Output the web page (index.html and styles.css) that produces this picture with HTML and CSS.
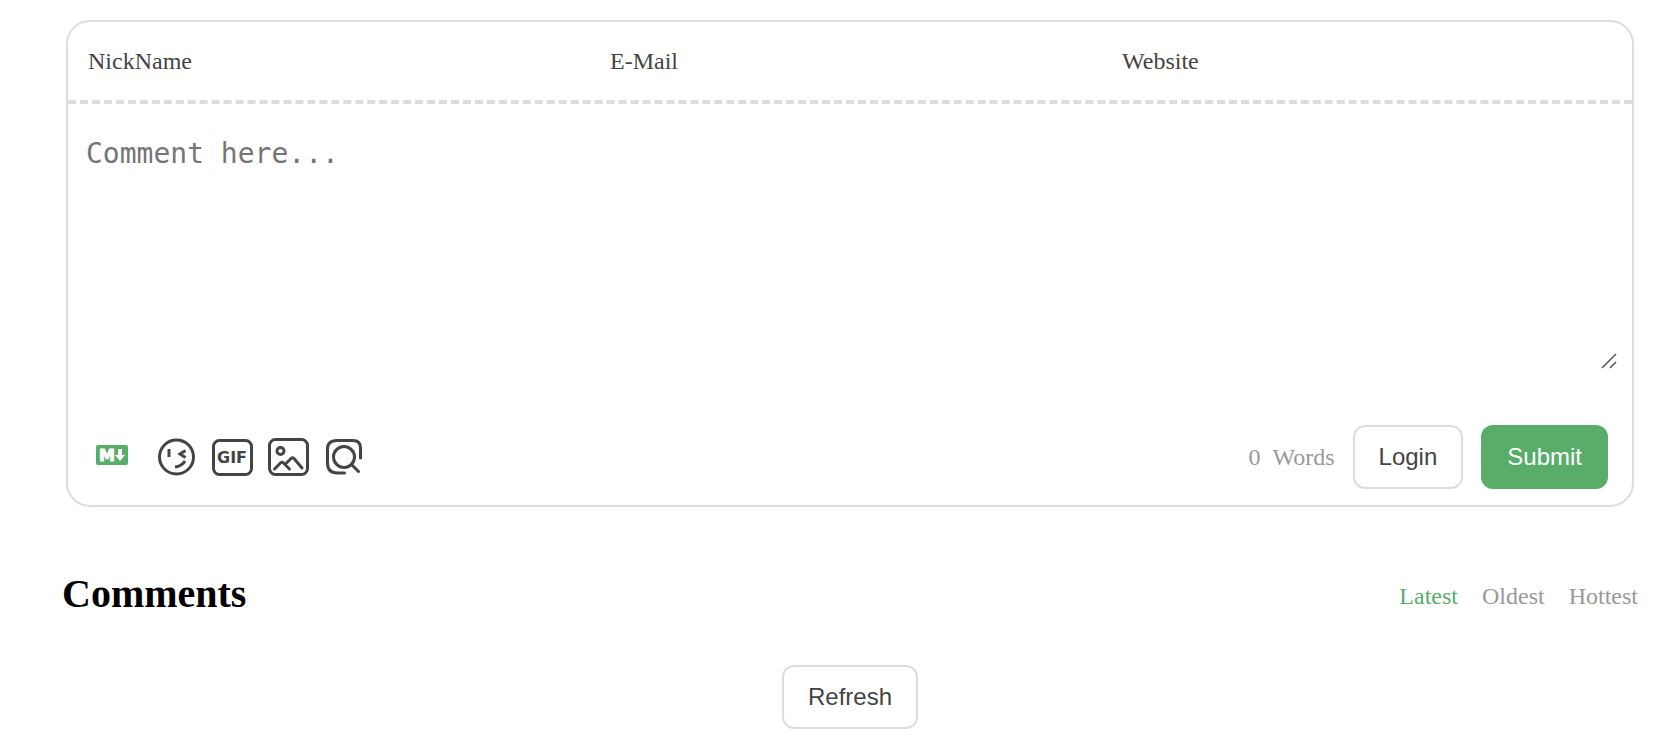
FILE: index.html
```html
<!DOCTYPE html>
<html lang="en">
	<head>
		<meta charset="utf-8">
		<title>Comments</title>
		<link rel="stylesheet" href="styles.css">
	</head>
	<body>
		<div class="comment">
			<form class="panel">
				<div class="header">
					<div class="header-item">
						<label for="nick">NickName</label>
						<input type="text" id="nick" name="nick">
					</div>
					<div class="header-item">
						<label for="mail">E-Mail</label>
						<input type="email" id="mail" name="mail">
					</div>
					<div class="header-item">
						<label for="link">Website</label>
						<input type="text" id="link" name="link">
					</div>
				</div>
				<div class="editor-box">
					<textarea class="editor" aria-label="Comment" placeholder="Comment here..."></textarea>
					<svg class="grip" viewBox="0 0 16 16"><path d="M1 15 15 1M9 15 15 9"/></svg>
				</div>
				<div class="footer">
					<div class="actions">
						<a class="markdown" href="#" aria-label="Markdown guide">
							<svg viewBox="0 0 32 20">
								<rect width="32" height="20" rx="2"/>
								<text x="3" y="16">M</text>
								<path d="M22 4h4v6h3l-5 6-5-6h3z"/>
							</svg>
						</a>
						<!-- emoji -->
						<button type="button" class="action" aria-label="Emoji">
							<svg viewBox="0 0 42 42">
								<circle cx="20.500" cy="21" r="17"/>
								<path class="flat" d="M13 13v8M29.500 14.500l-5.500 3.500 5.500 3.500"/>
								<path class="flat" d="M29 25c-2 3.500-5.500 5.500-10 6"/>
							</svg>
						</button>
						<!-- gif -->
						<button type="button" class="action" aria-label="GIF">
							<svg viewBox="0 0 42 42">
								<rect x="1.500" y="4.500" width="38" height="34" rx="6"/>
								<text x="5" y="27">GIF</text>
							</svg>
						</button>
						<!-- image -->
						<button type="button" class="action" aria-label="Image">
							<svg viewBox="0 0 42 42">
								<rect x="1.500" y="3.500" width="38" height="35" rx="6"/>
								<circle cx="12.500" cy="15" r="3.500"/>
								<path d="M6.500 33l6-6q1.500-1.500 3 0l6 6M17.500 28l5.500-5.500q1.500-1.500 3 0L34 32"/>
							</svg>
						</button>
						<!-- preview -->
						<button type="button" class="action" aria-label="Preview">
							<svg viewBox="0 0 42 42">
								<path d="M36.500 22V12q0-7.500-7.500-7.500H13Q3.500 4.500 3.500 13v14q0 10 10 10h7"/>
								<circle cx="20" cy="21" r="10.500"/>
								<path d="M27.500 28.500l7 7"/>
							</svg>
						</button>
					</div>
					<div class="info">
						<div class="words"><span>0</span><span>Words</span></div>
						<button type="button" class="btn">Login</button>
						<button type="submit" class="btn primary">Submit</button>
					</div>
				</div>
			</form>
			<div class="meta">
				<h3 class="count">Comments</h3>
				<ul class="sort">
					<li><a class="active" href="#">Latest</a></li>
					<li><a href="#">Oldest</a></li>
					<li><a href="#">Hottest</a></li>
				</ul>
			</div>
			<div class="operation">
				<button type="button" class="btn">Refresh</button>
			</div>
		</div>
	</body>
</html>
```
FILE: styles.css
```css
* {
	box-sizing: border-box;
	margin: 0;
	padding: 0;
}
body {
	padding: 20px 30px 12px 62px;
	background: #fff;
	color: #444;
	font-family: "Liberation Serif", "Times New Roman", serif;
	font-size: 24px;
	line-height: 28px;
}
ul {
	list-style: none;
}
a {
	text-decoration: none;
}
.panel {
	margin: 0 4px;
	border: 2px solid #ddd;
	border-radius: 24px;
}

/* visitor fields */
.header {
	display: grid;
	grid-template-columns: 522fr 512fr 510fr;
	padding: 0 10px;
	border-bottom: 4px dashed #ddd;
}
.header-item {
	display: flex;
	align-items: center;
	height: 78px;
}
.header-item label {
	padding: 0 10px;
}
.header-item input {
	flex: 1;
	min-width: 0;
	border: none;
	outline: none;
	background: transparent;
	font-size: 24px;
}

/* editor */
.editor-box {
	position: relative;
	margin: 10px 12px 0;
}
.editor {
	display: block;
	width: 100%;
	height: 258px;
	padding: 24px 6px;
	border: none;
	outline: none;
	resize: none;
	background: transparent;
	font-family: "DejaVu Sans Mono", monospace;
	font-size: 28px;
	line-height: 32px;
}
.editor::placeholder {
	color: #757575;
}
.grip {
	position: absolute;
	right: 3px;
	bottom: 3px;
	width: 16px;
	height: 16px;
	stroke: #555;
	stroke-width: 1.5;
	pointer-events: none;
}

/* toolbar */
.footer {
	display: flex;
	align-items: center;
	justify-content: space-between;
	padding: 53px 24px 16px 28px;
}
.actions {
	display: flex;
	align-items: center;
	gap: 14px;
}
.markdown {
	margin-right: 14px;
	padding-bottom: 4px;
}
.markdown svg {
	display: block;
	width: 32px;
	height: 20px;
	fill: #fff;
}
.markdown rect {
	fill: #58ad69;
}
.markdown text {
	stroke: #fff;
	stroke-width: 1;
	font: bold 16px "DejaVu Sans", sans-serif;
}
.action {
	border: none;
	background: transparent;
	color: #444;
	cursor: pointer;
}
.action svg {
	display: block;
	width: 42px;
	height: 42px;
	fill: none;
	stroke: currentColor;
	stroke-width: 3;
	stroke-linecap: round;
	stroke-linejoin: round;
}
.action .flat {
	stroke-linecap: butt;
	stroke-linejoin: miter;
}
.action text {
	fill: currentColor;
	stroke: none;
	font: bold 16px "DejaVu Sans", sans-serif;
}
.info {
	display: flex;
	align-items: center;
	gap: 18px;
}
.words {
	display: flex;
	gap: 12px;
	color: #999;
}
.btn {
	height: 64px;
	padding: 0 24px;
	border: 2px solid #ddd;
	border-radius: 12px;
	background: transparent;
	color: #444;
	font-family: "Liberation Sans", Arial, sans-serif;
	font-size: 24px;
	cursor: pointer;
}
.btn.primary {
	border-color: #58ad69;
	background: #58ad69;
	color: #fff;
}

/* list head */
.meta {
	display: flex;
	align-items: center;
	justify-content: space-between;
	padding: 62px 0 46px;
}
.count {
	color: #000;
	font-size: 40px;
	line-height: 50px;
}
.sort {
	display: flex;
	gap: 24px;
	padding-top: 4px;
}
.sort a {
	color: #999;
}
.sort .active {
	color: #58ad69;
}
.operation {
	text-align: center;
}
```
